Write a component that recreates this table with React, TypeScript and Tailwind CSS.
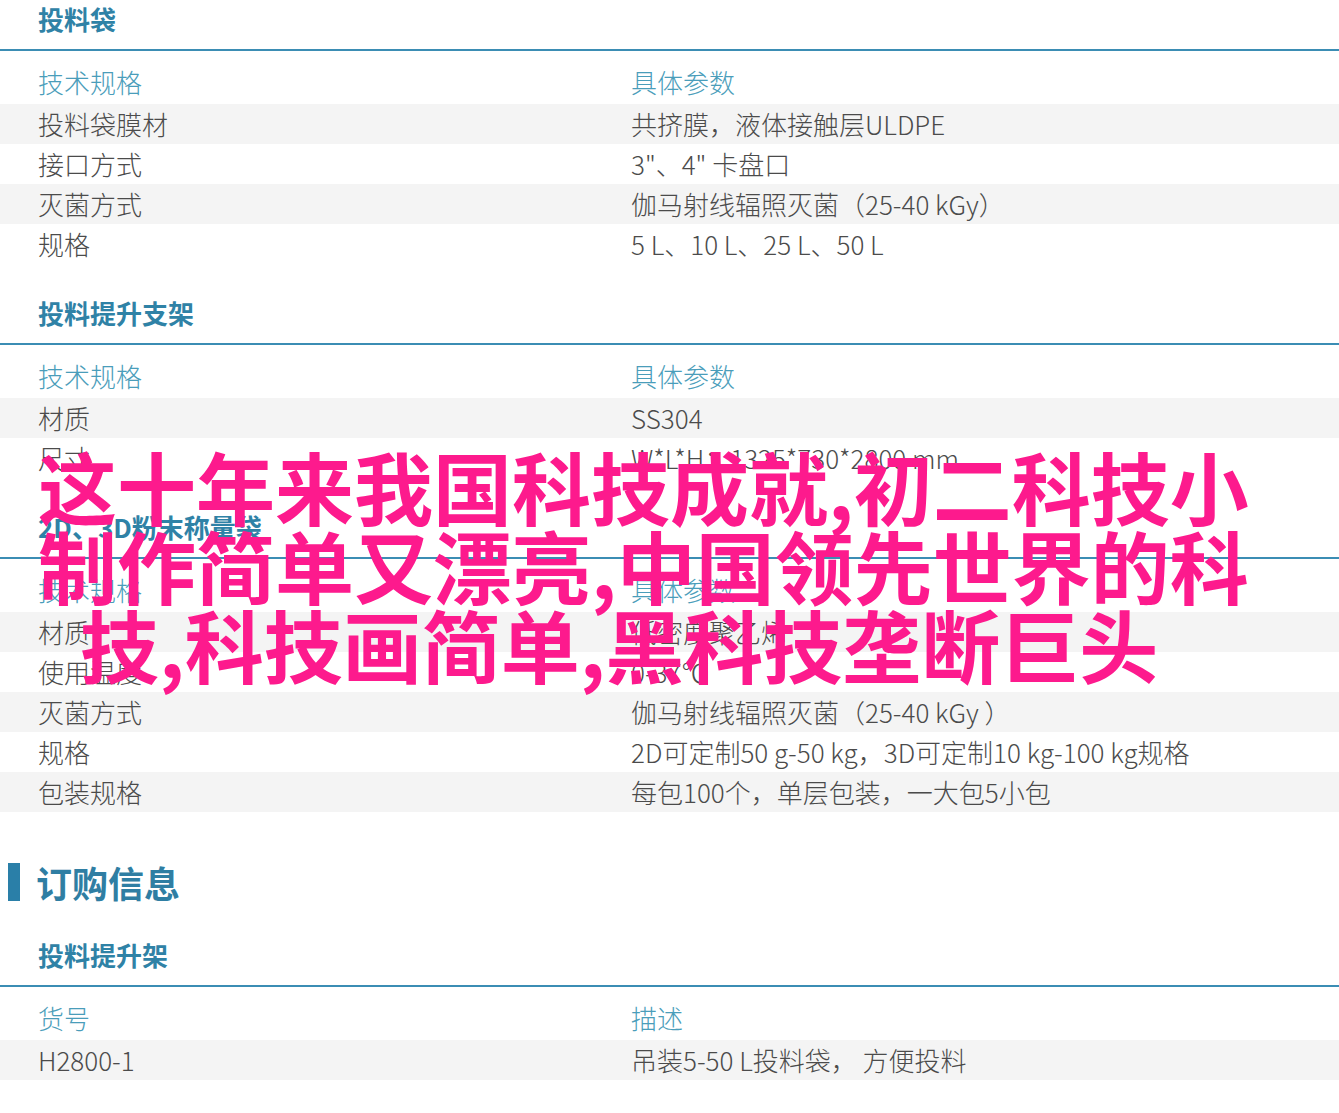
import React from "react";

type Row = [string, string];

interface SpecSectionProps {
  title: string;
  head: Row;
  rows: Row[];
  className?: string;
}

const SpecSection: React.FC<SpecSectionProps> = ({ title, head, rows, className = "" }) => {
  return (
    <section className={className}>
      <div className="pl-[38px] pb-[10px] text-[26px] leading-[40px] font-bold text-[#2f82a6]">
        {title}
      </div>
      <div className="h-[2px] bg-[#3b8db4]" />
      <div className="flex pt-[11px] pb-[2px] text-[26px] leading-[40px] font-light text-[#4a9dba]">
        <div className="w-[631px] pl-[38px]">{head[0]}</div>
        <div>{head[1]}</div>
      </div>
      {rows.map((row, i) => (
        <div
          key={i}
          className={`flex h-10 text-[26px] leading-[40px] font-light text-[#4b4b4b] ${
            i % 2 === 0 ? "bg-[#f4f4f4]" : "bg-white"
          }`}
        >
          <div className="w-[631px] pl-[38px]">{row[0]}</div>
          <div>{row[1]}</div>
        </div>
      ))}
    </section>
  );
};

export default function App() {
  return (
    <div className="relative w-[1339px] h-[1113px] overflow-hidden bg-white font-['Noto_Sans_CJK_SC','Noto_Sans',sans-serif]">
      <div className="-mt-[1px]">
        <SpecSection
          title="投料袋"
          head={["技术规格", "具体参数"]}
          rows={[
            ["投料袋膜材", "共挤膜，液体接触层ULDPE"],
            ["接口方式", "3\"、4\" 卡盘口"],
            ["灭菌方式", "伽马射线辐照灭菌（25-40 kGy）"],
            ["规格", "5 L、10 L、25 L、50 L"],
          ]}
        />
        <SpecSection
          className="mt-[29px]"
          title="投料提升支架"
          head={["技术规格", "具体参数"]}
          rows={[
            ["材质", "SS304"],
            ["尺寸", "W*L*H：1325*730*2800 mm"],
          ]}
        />
        <SpecSection
          className="mt-[29px]"
          title="2D、3D粉末称量袋"
          head={["技术规格", "具体参数"]}
          rows={[
            ["材质", "低密度聚乙烯"],
            ["使用温度", "0-37℃"],
            ["灭菌方式", "伽马射线辐照灭菌（25-40 kGy ）"],
            ["规格", "2D可定制50 g-50 kg，3D可定制10 kg-100 kg规格"],
            ["包装规格", "每包100个，单层包装，一大包5小包"],
          ]}
        />

        <div className="mt-[46px] flex items-center h-12 pl-[8px]">
          <span className="w-[12px] h-[38px] bg-[#2a7fa8]" />
          <span className="ml-[16px] text-[36px] leading-[48px] font-bold text-[#2f7ea3]">订购信息</span>
        </div>

        <SpecSection
          className="mt-[29px]"
          title="投料提升架"
          head={["货号", "描述"]}
          rows={[["H2800-1", "吊装5-50 L投料袋， 方便投料"]]}
        />
      </div>

      <div className="absolute left-0 top-[446px] w-full text-[79px] leading-[79px] font-bold text-[#fd1a8d] whitespace-nowrap">
        <div className="pl-[38px]">这十年来我国科技成就,初二科技小</div>
        <div className="pl-[38px]">制作简单又漂亮,中国领先世界的科</div>
        <div className="pl-[80px]">技,科技画简单,黑科技垄断巨头</div>
      </div>
    </div>
  );
}
